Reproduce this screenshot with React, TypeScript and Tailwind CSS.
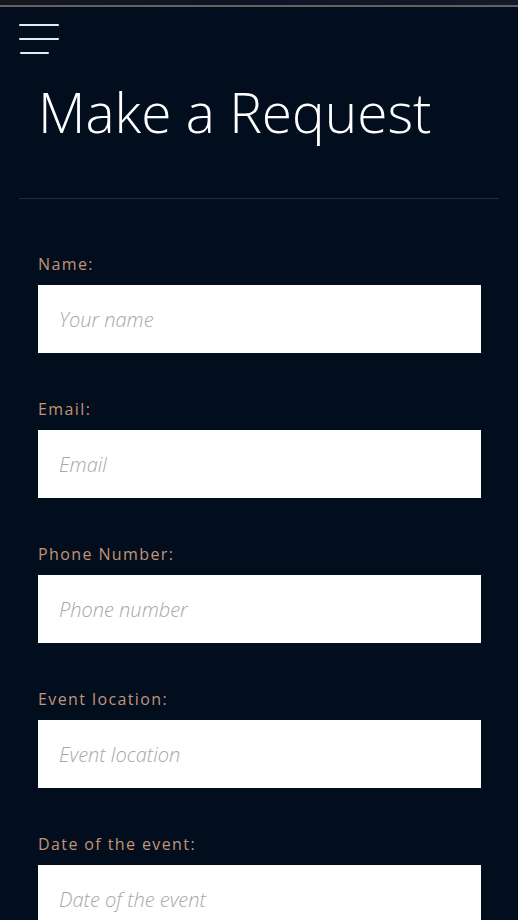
import React from "react";

const fields = [
  { label: "Name:", placeholder: "Your name" },
  { label: "Email:", placeholder: "Email" },
  { label: "Phone Number:", placeholder: "Phone number" },
  { label: "Event location:", placeholder: "Event location" },
  { label: "Date of the event:", placeholder: "Date of the event" },
];

export default function App() {
  return (
    <div
      className="min-h-[920px] w-full bg-[#020e1d] overflow-hidden"
      style={{ fontFamily: "'Open Sans', 'Liberation Sans', sans-serif" }}
    >
      <div className="h-[5px] bg-gradient-to-r from-[#15171f] via-[#0c1626] to-[#121a28]" />
      <div className="h-[2px] bg-[#67605e]" />
      <div className="px-[19px] pt-[17px]">
        <button className="flex flex-col gap-[12px] w-[40px]">
          <span className="block h-[2px] w-[40px] bg-[#e6ecf2] rounded" />
          <span className="block h-[2px] w-[40px] bg-[#e6ecf2] rounded" />
          <span className="block h-[2px] w-[29px] ml-[1px] bg-[#e6ecf2] rounded" />
        </button>
      </div>
      <div className="px-[19px]">
        <h1 className="pl-[19px] pt-[26px] text-[55px] leading-[64px] font-light text-white tracking-[0px]">
          Make a Request
        </h1>
        <div className="mt-[54px] h-px bg-[#222c3a]" />
      </div>
      <form className="px-[38px] pt-[53px] flex flex-col gap-[44px]">
        {fields.map((f) => (
          <div key={f.label} className="flex flex-col">
            <label className="text-[16px] leading-[24px] tracking-[1.4px] text-[#c29479] mb-[9px]">
              {f.label}
            </label>
            <input
              placeholder={f.placeholder}
              className="h-[68px] w-[443px] bg-white px-[21px] text-[20px] font-light italic text-gray-700 placeholder:text-[#a4a8ad] outline-none"
            />
          </div>
        ))}
      </form>
    </div>
  );
}
